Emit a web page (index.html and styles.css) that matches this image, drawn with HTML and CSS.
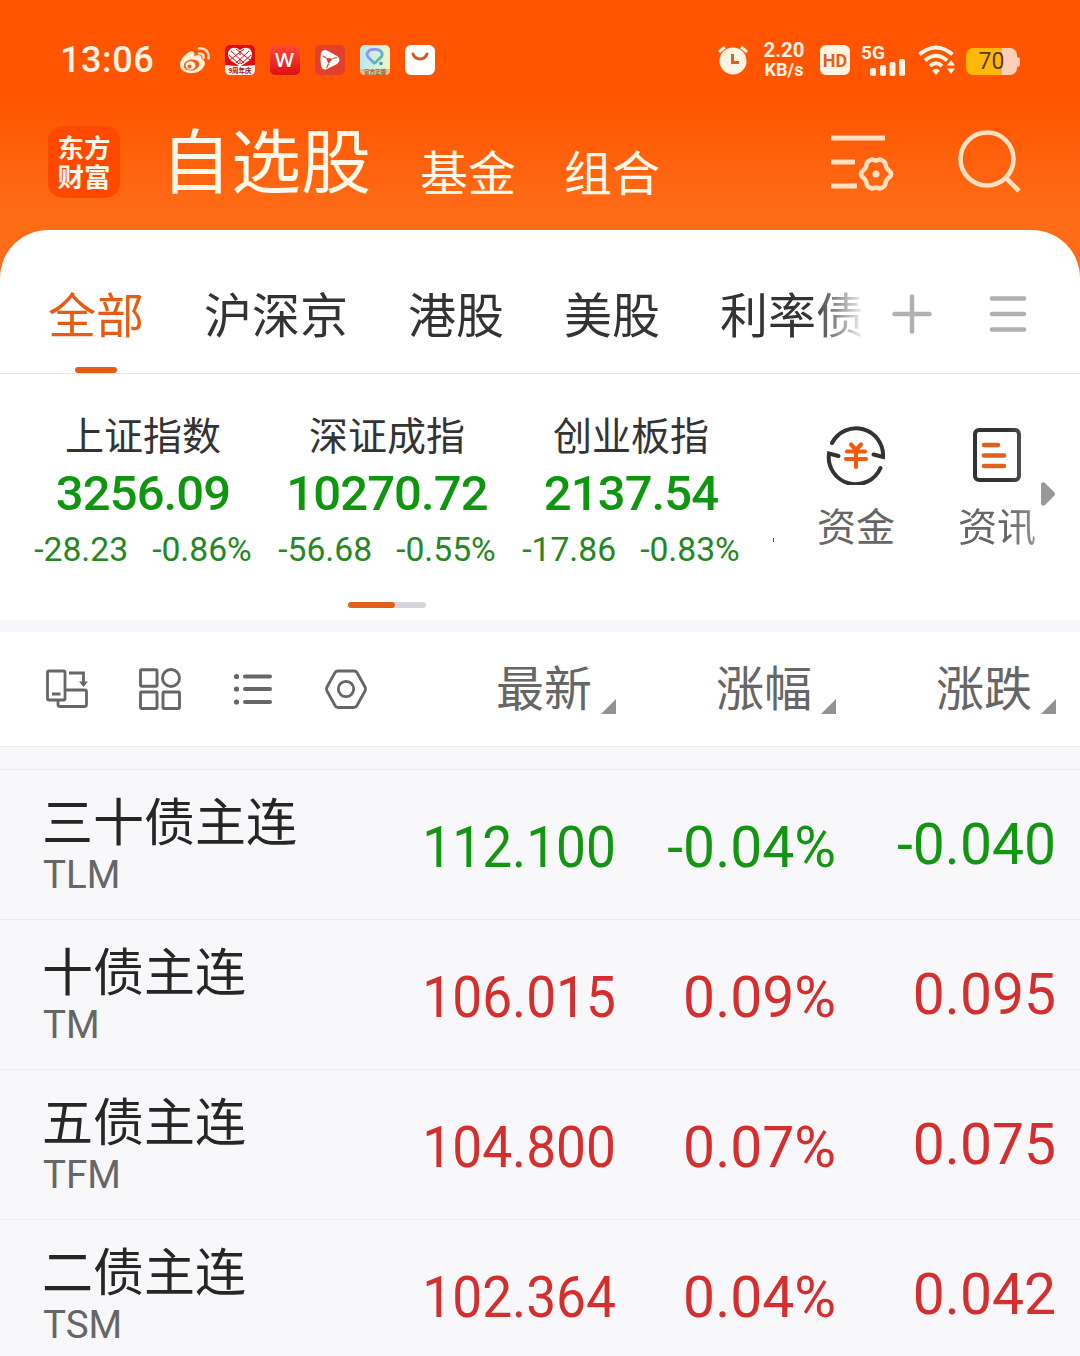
FILE: index.html
```html
<!DOCTYPE html>
<html lang="zh-CN">
<head>
    <meta charset="UTF-8">
    <meta name="viewport" content="width=device-width, initial-scale=1.0">
    <title>自选股</title>
    <link rel="stylesheet" href="styles.css">
</head>
<body>
    <div class="screen">
        <div class="status-bar">
            <span class="time">13:06</span>
            <div class="notifications">
                <!-- weibo -->
                <svg width="31" height="30" viewBox="0 0 31 30">
                    <path d="M1 20C1 13 10 5 14 6.500C16 7.300 15.500 9 15 11C19 9 23 9.500 22.500 14C28 16 26 22 22 25C14 31 1 28 1 20Z" fill="#fff0d8"/>
                    <ellipse cx="12.500" cy="20" rx="8" ry="5.500" fill="#e8641c" transform="rotate(-10 12.500 20)"/>
                    <ellipse cx="11.500" cy="20.500" rx="5" ry="4.200" fill="#fff0d8"/>
                    <circle cx="10.500" cy="21.500" r="2" fill="#e8641c"/>
                    <path d="M20 8.500C23 8 25 10 24.500 13M20 3.500C26 2.500 30.500 7 29.500 13.500" fill="none" stroke="#ffe0bc" stroke-width="2.500" stroke-linecap="round"/>
                </svg>
                <!-- heart, anniversary -->
                <svg width="30" height="30" viewBox="0 0 30 30">
                    <rect width="30" height="30" rx="5" fill="#dd0d0d"/>
                    <path d="M0 20Q15 22 30 20V25Q30 30 25 30H5Q0 30 0 25Z" fill="#fff3e6"/>
                    <path d="M15 21.500L5 15Q1 9 5 4Q10 1 15 5Q20 1 25 4Q29 9 25 15Z" fill="#fff"/>
                    <path d="M6 6L19 18M4 10l10 9M11 4L25 15M24 6L11 18M26 10L16 19M19 4L5 15M15 6v4M15 15v4" stroke="#dd0d0d" stroke-width="1"/>
                    <text x="15" y="28" class="tiny-red">9周年庆</text>
                </svg>
                <!-- W -->
                <svg width="30" height="30" viewBox="0 0 30 30">
                    <defs>
                        <linearGradient id="wRed" x1="0" y1="0" x2="0" y2="1">
                            <stop offset="0" stop-color="#ff4b38"/>
                            <stop offset="1" stop-color="#dc1111"/>
                        </linearGradient>
                    </defs>
                    <rect width="30" height="30" rx="5" fill="url(#wRed)"/>
                    <text x="14.500" y="22" class="w-mark">W</text>
                </svg>
                <!-- play -->
                <svg width="30" height="30" viewBox="0 0 30 30">
                    <rect width="30" height="30" rx="5" fill="#e1412c"/>
                    <path d="M6 8Q8 3.500 13 6L22 11Q27 15 22 19L12 24Q7 26 6 20Q5 13 6 8Z" fill="#fff"/>
                    <path d="M11 13L18 13.500L13.500 19Z" fill="#e1412c"/>
                    <path d="M11 13L8 11M18 13.500L22 12.500M13.500 19L11.500 23" stroke="#e1412c" stroke-width="1.200"/>
                </svg>
                <!-- colour ring -->
                <svg width="30" height="30" viewBox="0 0 30 30">
                    <defs>
                        <linearGradient id="pale" x1="0" y1="0" x2="1" y2="0">
                            <stop offset="0" stop-color="#b4eaf5"/>
                            <stop offset="1" stop-color="#f5f3c2"/>
                        </linearGradient>
                        <linearGradient id="ring" x1="0" y1="0" x2="1" y2="1">
                            <stop offset="0" stop-color="#a98ae8"/>
                            <stop offset="0.500" stop-color="#69a8e8"/>
                            <stop offset="1" stop-color="#46cf68"/>
                        </linearGradient>
                    </defs>
                    <rect width="30" height="30" rx="5" fill="url(#pale)"/>
                    <path d="M0 24H30V25Q30 30 25 30H5Q0 30 0 25Z" fill="#e8bd80"/>
                    <path d="M15 19L8 12Q6 9 8 7Q10 4 14 4.500Q20 4 22 8Q23 11 20 13L15 18" fill="none" stroke="url(#ring)" stroke-width="2.800" stroke-linejoin="round"/>
                    <circle cx="21" cy="18.500" r="1.700" fill="#229bb8"/>
                    <text x="15" y="29" class="tiny-brown">官方正版</text>
                </svg>
                <!-- smile -->
                <svg width="30" height="30" viewBox="0 0 30 30">
                    <rect width="30" height="30" rx="6" fill="#fff"/>
                    <path d="M8 9Q10 14 15 14Q20 14 22 9" fill="none" stroke="#cf5a1b" stroke-width="3" stroke-linecap="round"/>
                </svg>
            </div>
            <div class="system">
                <svg class="alarm" width="30" height="30" viewBox="0 0 30 30">
                    <circle cx="15" cy="16" r="13.500" fill="#fff3e3"/>
                    <path d="M1 7L7 2M29 7L23 2" stroke="#fff3e3" stroke-width="3"/>
                    <path d="M14.500 9V17.500H21" fill="none" stroke="#e0601f" stroke-width="3"/>
                </svg>
                <div class="speed"><span>2.20</span><small>KB/s</small></div>
                <span class="hd">HD</span>
                <div class="signal">
                    <span>5G</span>
                    <svg width="36" height="17" viewBox="0 0 36 17">
                        <g fill="#fff3e3">
                            <rect x="0" y="9" width="6" height="8" rx="2"/>
                            <rect x="10" y="6" width="6" height="11" rx="2"/>
                            <rect x="19.500" y="3" width="6" height="14" rx="2"/>
                            <rect x="29" y="0" width="6" height="17" rx="2"/>
                        </g>
                    </svg>
                </div>
                <svg class="wifi" width="37" height="30" viewBox="0 0 37 30">
                    <path d="M1.500 9.500Q18 -4.500 34.500 9.500M7 15.500Q18 6 29 15.500M12 21Q18 15.500 24 21" fill="none" stroke="#fff3e3" stroke-width="3.800"/>
                    <path d="M14 25.500Q18 22 22 25.500L18 30Z" fill="#fff3e3"/>
                    <path d="M33 15l4 5.500h-8ZM33 29l4-5.500h-8Z" fill="#fff3e3"/>
                </svg>
                <div class="battery"><span>70</span></div>
            </div>
        </div>

        <div class="header">
            <div class="logo"><span>东方</span><span>财富</span></div>
            <h1>自选股</h1>
            <span class="section">基金</span>
            <span class="section">组合</span>
            <div class="header-icons">
                <svg width="64" height="64" viewBox="0 0 64 64">
                    <g fill="none" stroke="#ffe0c0" stroke-width="5">
                        <path d="M1 8H55M1 32H25M1 56H27"/>
                        <path stroke-width="4.500" stroke-linejoin="round" d="M42.500 29.500Q46 31.500 49.500 29.500Q55 30.500 55.500 34.500Q55.500 38 60 41.500Q62 44 60 46.500Q55.500 50 55.500 53.500Q55 57.500 49.500 58.500Q46 56.500 42.500 58.500Q37 57.500 36.500 53.500Q36.500 50 32 46.500Q30 44 32 41.500Q36.500 38 36.500 34.500Q37 30.500 42.500 29.500Z"/>
                    </g>
                    <circle cx="46" cy="44" r="3.600" fill="#ffe0c0"/>
                </svg>
                <svg width="64" height="64" viewBox="0 0 64 64">
                    <g fill="none" stroke="#ffe0c0" stroke-width="4.600">
                        <circle cx="30" cy="29" r="26.500"/>
                        <path d="M48 47L62 61"/>
                    </g>
                </svg>
            </div>
        </div>

        <div class="card">
            <div class="tabs">
                <div class="tab-list">
                    <span class="tab active">全部</span>
                    <span class="tab">沪深京</span>
                    <span class="tab">港股</span>
                    <span class="tab">美股</span>
                    <span class="tab">利率债</span>
                </div>
                <div class="tab-actions">
                    <svg width="40" height="40" viewBox="0 0 40 40">
                        <path d="M20 2.500V37.500M2.500 20H37.500" stroke="#b0b0b0" stroke-width="4.500" stroke-linecap="round"/>
                    </svg>
                    <svg width="40" height="40" viewBox="0 0 40 40">
                        <path d="M4 4.500H36M4 20H36M4 35.500H36" stroke="#b0b0b0" stroke-width="4.500" stroke-linecap="round"/>
                    </svg>
                </div>
            </div>

            <div class="indices">
                <div class="index">
                    <div class="index-name">上证指数</div>
                    <div class="index-value">3256.09</div>
                    <div class="index-change"><span>-28.23</span><span>-0.86%</span></div>
                </div>
                <div class="index">
                    <div class="index-name">深证成指</div>
                    <div class="index-value">10270.72</div>
                    <div class="index-change"><span>-56.68</span><span>-0.55%</span></div>
                </div>
                <div class="index">
                    <div class="index-name">创业板指</div>
                    <div class="index-value">2137.54</div>
                    <div class="index-change"><span>-17.86</span><span>-0.83%</span></div>
                </div>
                <div class="next-index"></div>
                <div class="shortcuts">
                    <div class="shortcut">
                        <svg width="60" height="60" viewBox="0 0 60 60">
                            <g fill="none" stroke="#333" stroke-width="4">
                                <path stroke-linecap="round" d="M6 18A27 27 0 0 1 57 32L47.500 29.500"/>
                                <path stroke-linecap="round" d="M54.500 43A27 27 0 0 1 3 28.500L12.500 31"/>
                            </g>
                            <path d="M25 19.500L30 25L35 19.500M21 26.500H39M20 34H40M30 25V42" fill="none" stroke="#f25a10" stroke-width="4.200" stroke-linecap="round"/>
                        </svg>
                        <span>资金</span>
                    </div>
                    <div class="shortcut fade">
                        <svg width="60" height="60" viewBox="0 0 60 60">
                            <rect x="8" y="5" width="44" height="50" rx="4" fill="none" stroke="#333" stroke-width="4"/>
                            <path d="M17 20H31M17 30.500H37M17 41H37" stroke="#e0601c" stroke-width="4.500" stroke-linecap="round"/>
                        </svg>
                        <span>资讯</span>
                    </div>
                </div>
                <svg class="more" width="16" height="26" viewBox="0 0 16 26">
                    <path d="M1 3Q2 0 5 2L14 11Q16 13 14 15L5 24Q2 26 1 23Z" fill="#999"/>
                </svg>
                <div class="pager"><span></span></div>
            </div>

            <div class="toolbar">
                <div class="tools">
                    <svg width="42" height="42" viewBox="0 0 42 42">
                        <g fill="none" stroke="#666" stroke-width="2.800">
                            <rect x="1.500" y="3" width="17.500" height="29" rx="1.500"/>
                            <path d="M6 26H14.500M23 5H37.500V15M20 22H38.500Q40.500 22 40.500 24V36.500Q40.500 38.500 38.500 38.500H14Q12 38.500 12 36.500V33"/>
                        </g>
                        <path d="M33 13.500H42L37.500 19Z" fill="#666"/>
                    </svg>
                    <svg width="42" height="42" viewBox="0 0 42 42">
                        <g fill="none" stroke="#666" stroke-width="2.900">
                            <rect x="1.500" y="1.800" width="16.500" height="16.500" rx="1"/>
                            <circle cx="32" cy="10" r="8.500"/>
                            <rect x="1.500" y="24" width="16.500" height="16.500" rx="1"/>
                            <rect x="24" y="24" width="16.500" height="16.500" rx="1"/>
                        </g>
                    </svg>
                    <svg width="42" height="42" viewBox="0 0 42 42">
                        <path d="M13 8.500H38M13 21H38M13 34H38" stroke="#666" stroke-width="4" stroke-linecap="round"/>
                        <g fill="#666">
                            <circle cx="4.500" cy="8.500" r="2.600"/>
                            <circle cx="4.500" cy="21" r="2.600"/>
                            <circle cx="4.500" cy="34" r="2.600"/>
                        </g>
                    </svg>
                    <svg width="42" height="42" viewBox="0 0 42 42">
                        <g fill="none" stroke="#666" stroke-width="2.800">
                            <path stroke-linejoin="round" d="M13 3H29Q31 3 32 4.500L40 19Q41 21 40 23L32 37.500Q31 39.500 29 39.500H13Q11 39.500 10 37.500L2 23Q1 21 2 19L10 4.500Q11 3 13 3Z"/>
                            <circle cx="21" cy="21" r="7.700"/>
                        </g>
                    </svg>
                </div>
                <div class="sort">最新</div>
                <div class="sort">涨幅</div>
                <div class="sort">涨跌</div>
            </div>
        </div>

        <div class="stocks">
            <div class="stock down">
                <div class="stock-name">三十债主连<small>TLM</small></div>
                <span class="price">112.100</span>
                <span>-0.04%</span>
                <span class="diff">-0.040</span>
            </div>
            <div class="stock up">
                <div class="stock-name">十债主连<small>TM</small></div>
                <span class="price">106.015</span>
                <span>0.09%</span>
                <span class="diff">0.095</span>
            </div>
            <div class="stock up">
                <div class="stock-name">五债主连<small>TFM</small></div>
                <span class="price">104.800</span>
                <span>0.07%</span>
                <span class="diff">0.075</span>
            </div>
            <div class="stock up">
                <div class="stock-name">二债主连<small>TSM</small></div>
                <span class="price">102.364</span>
                <span>0.04%</span>
                <span class="diff">0.042</span>
            </div>
        </div>
    </div>
</body>
</html>
```

FILE: styles.css
```css
* {
    margin: 0;
    padding: 0;
    box-sizing: border-box;
}

body {
    font-family: Roboto, "Noto Sans CJK SC", sans-serif;
    color: #333;
}

svg {
    display: block;
    flex: none;
}

.screen {
    width: 1080px;
    height: 1356px;
    overflow: hidden;
    background: linear-gradient(#ff5500 100px, #ff6c18 215px);
}

/* Status bar */
.status-bar {
    display: flex;
    align-items: center;
    height: 120px;
    padding: 0 60px;
    color: #fff3e3;
}

.time {
    width: 119px;
    font-size: 36px;
    font-weight: 500;
    letter-spacing: 0.6px;
}

.notifications {
    display: flex;
    gap: 15px;
}

.tiny-red, .tiny-brown {
    font-size: 6.5px;
    font-weight: bold;
    text-anchor: middle;
    fill: #a01010;
}

.tiny-brown {
    font-size: 5.5px;
    fill: #8a6a42;
}

.w-mark {
    font-family: "Open Sans", sans-serif;
    font-size: 20px;
    font-weight: 600;
    text-anchor: middle;
    fill: #fff;
}

.system {
    display: flex;
    align-items: center;
    margin-left: auto;
}

.alarm {
    margin-right: 2px;
}

.speed {
    width: 42px;
    margin: 0 15px 0 13px;
    text-align: center;
    font-size: 20.5px;
    font-weight: 700;
    line-height: 19px;
}

.speed span {
    display: block;
}

.speed small {
    display: block;
    font-size: 18px;
}

.hd {
    width: 30px;
    height: 30px;
    border-radius: 6px;
    background: #fff3e3;
    color: #e0601f;
    font-size: 18px;
    font-weight: 700;
    line-height: 31px;
    text-align: center;
}

.signal {
    width: 45px;
    height: 31px;
    margin: 0 12px 0 11px;
    font-size: 19px;
    font-weight: 700;
    line-height: 15px;
}

.signal span {
    display: block;
    height: 14px;
}

.signal svg {
    margin-left: 9px;
}

.battery {
    position: relative;
    width: 51px;
    height: 27px;
    margin: 3px 3px 0 11px;
    border-radius: 7px;
    background: linear-gradient(90deg, #ffb80a 36px, #ffcfb8 36px);
    color: #5a3a10;
    font-size: 23px;
    line-height: 28px;
    text-align: center;
}

.battery::after {
    content: "";
    position: absolute;
    left: 51px;
    top: 9px;
    width: 3px;
    height: 10px;
    border-radius: 0 3px 3px 0;
    background: #ffcfb8;
}

/* Header */
.header {
    display: flex;
    height: 110px;
    padding: 0 59px 0 48px;
    color: #fff8e8;
}

.logo {
    display: flex;
    flex-direction: column;
    width: 72px;
    height: 72px;
    margin: 6px 41px 0 0;
    padding-top: 6px;
    border-radius: 15px;
    background: #ff4800;
    font-family: "Noto Sans CJK SC", sans-serif;
    font-size: 26.5px;
    font-weight: 700;
    line-height: 29px;
    text-align: center;
}

h1 {
    margin: -6px 49px 0 0;
    font-size: 70px;
    font-weight: 400;
    line-height: 100px;
}

.section {
    margin: 20px 48px 0 0;
    font-size: 48px;
    line-height: 70px;
}

.header-icons {
    display: flex;
    gap: 63px;
    margin: 10px 0 0 auto;
}

/* White card */
.card {
    background: #fff;
    border-radius: 48px 48px 0 0;
}

.tabs {
    display: flex;
    align-items: center;
    height: 144px;
    padding: 0 52px 0 48px;
    border-bottom: 1px solid #e6e6e6;
}

.tab-list {
    display: flex;
    gap: 60px;
    width: 816px;
    height: 143px;
    overflow: hidden;
    white-space: nowrap;
    font-size: 48px;
    line-height: 173px;
    -webkit-mask-image: linear-gradient(90deg, #000 765px, transparent 818px);
    mask-image: linear-gradient(90deg, #000 765px, transparent 818px);
}

.tab {
    flex: none;
    height: 143px;
}

.tab.active {
    position: relative;
    color: #e65c14;
}

.tab.active::after {
    content: "";
    position: absolute;
    left: 27px;
    bottom: 0;
    width: 42px;
    height: 6px;
    border-radius: 3px;
    background: #e65c14;
}

.tab-actions {
    display: flex;
    gap: 56px;
    margin: 24px 0 0 28px;
}

/* Index strip */
.indices {
    position: relative;
    display: flex;
    height: 246px;
    padding: 37px 0 0 21px;
}

.index {
    width: 244px;
    text-align: center;
    white-space: nowrap;
}

.index-name {
    font-size: 39px;
    line-height: 52px;
}

.index-value {
    color: #0f960f;
    font-size: 49px;
    font-weight: 500;
    letter-spacing: -0.9px;
    line-height: 62px;
}

.index-change {
    display: flex;
    justify-content: center;
    gap: 24px;
    color: #238823;
    font-size: 33.7px;
    line-height: 50px;
}

/* edge of the next index, still off to the right */
.next-index {
    width: 1px;
    height: 4px;
    margin: 127px 0 0 20px;
    background: #8a3a3a;
}

.shortcuts {
    display: flex;
    gap: 63px;
    margin: 14px 0 0 43px;
}

.shortcut {
    display: flex;
    flex-direction: column;
    align-items: center;
    width: 78px;
    color: #666;
    font-size: 39px;
    line-height: 52px;
}

.shortcut span {
    margin-top: 17px;
}

.fade {
    -webkit-mask-image: linear-gradient(90deg, #000 50px, rgba(0, 0, 0, 0.7) 78px);
    mask-image: linear-gradient(90deg, #000 50px, rgba(0, 0, 0, 0.7) 78px);
}

.more {
    margin: 70px 0 0 4px;
}

.pager {
    position: absolute;
    left: 348px;
    bottom: 12px;
    width: 78px;
    height: 6px;
    border-radius: 3px;
    background: #d3d6da;
}

.pager span {
    display: block;
    width: 47px;
    height: 6px;
    border-radius: 3px;
    background: #e0601c;
}

/* Toolbar */
.toolbar {
    display: grid;
    grid-template-columns: 350px 220px 220px 220px;
    align-items: center;
    height: 127px;
    padding: 0 24px 0 46px;
    border-top: 12px solid #f6f7fa;
    border-bottom: 1px solid #ececee;
}

.tools {
    display: flex;
    gap: 51px;
}

.sort {
    position: relative;
    padding: 2px 24px 0 0;
    font-size: 48px;
    line-height: 68px;
    text-align: right;
    color: #666;
}

.sort::after {
    content: "";
    position: absolute;
    right: 0;
    bottom: 10px;
    border-left: 15px solid transparent;
    border-bottom: 15px solid #919196;
}

/* Stock list */
.stocks {
    height: 620px;
    padding-top: 22px;
    background: #f8f8fa;
}

.stock {
    display: grid;
    grid-template-columns: 354px 220px 220px 220px;
    height: 150px;
    padding: 0 24px 0 42px;
    border-top: 1px solid #ececee;
    font-size: 57px;
    line-height: 156px;
    text-align: right;
}

.stock-name {
    padding-top: 20px;
    color: #262626;
    font-size: 51px;
    line-height: 68px;
    text-align: left;
}

.stock-name small {
    display: block;
    margin-top: -7px;
    padding-left: 1px;
    color: #666;
    font-size: 38.5px;
    line-height: 48px;
}

.stock .price {
    transform: scaleX(0.935);
    transform-origin: right;
}

.stock .diff {
    line-height: 150px;
}

.up {
    color: #d32f2f;
}

.down {
    color: #129612;
}
```
